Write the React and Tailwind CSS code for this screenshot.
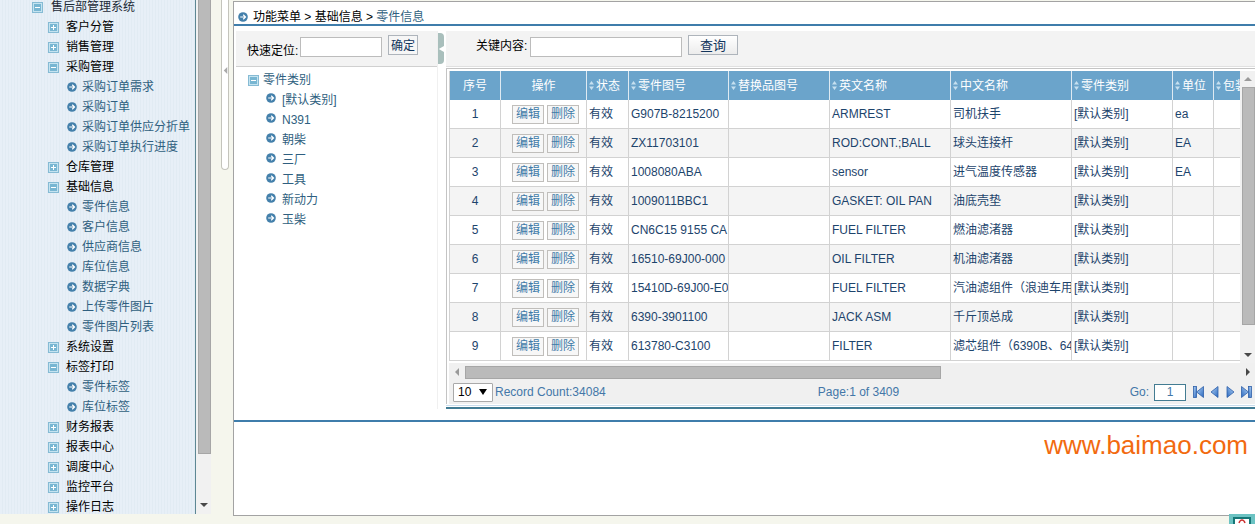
const cjk = "font-['Liberation_Sans','Noto_Sans_CJK_SC',sans-serif]";

const menu = [
  { level: 0, open: true, label: "售后部管理系统" },
  { level: 1, open: false, label: "客户分管" },
  { level: 1, open: false, label: "销售管理" },
  { level: 1, open: true, label: "采购管理" },
  { level: 2, label: "采购订单需求" },
  { level: 2, label: "采购订单" },
  { level: 2, label: "采购订单供应分折单" },
  { level: 2, label: "采购订单执行进度" },
  { level: 1, open: false, label: "仓库管理" },
  { level: 1, open: true, label: "基础信息" },
  { level: 2, label: "零件信息" },
  { level: 2, label: "客户信息" },
  { level: 2, label: "供应商信息" },
  { level: 2, label: "库位信息" },
  { level: 2, label: "数据字典" },
  { level: 2, label: "上传零件图片" },
  { level: 2, label: "零件图片列表" },
  { level: 1, open: false, label: "系统设置" },
  { level: 1, open: true, label: "标签打印" },
  { level: 2, label: "零件标签" },
  { level: 2, label: "库位标签" },
  { level: 1, open: false, label: "财务报表" },
  { level: 1, open: false, label: "报表中心" },
  { level: 1, open: false, label: "调度中心" },
  { level: 1, open: false, label: "监控平台" },
  { level: 1, open: false, label: "操作日志" },
];

const categories = ["[默认类别]", "N391", "朝柴", "三厂", "工具", "新动力", "玉柴"];

const columns = ["状态", "零件图号", "替换品图号", "英文名称", "中文名称", "零件类别", "单位", "包装"];

const rows = [
  ["G907B-8215200", "ARMREST", "司机扶手", "ea"],
  ["ZX11703101", "ROD:CONT.;BALL", "球头连接杆", "EA"],
  ["1008080ABA", "sensor", "进气温度传感器", "EA"],
  ["1009011BBC1", "GASKET: OIL PAN", "油底壳垫", ""],
  ["CN6C15 9155 CA", "FUEL FILTER", "燃油滤渚器", ""],
  ["16510-69J00-000", "OIL FILTER", "机油滤渚器", ""],
  ["15410D-69J00-E0", "FUEL FILTER", "汽油滤组件（浪迪车用", ""],
  ["6390-3901100", "JACK ASM", "千斤顶总成", ""],
  ["613780-C3100", "FILTER", "滤芯组件（6390B、64", ""],
];

function ToggleIcon({ open }) {
  return (
    <svg className="size-[11px] shrink-0" viewBox="0 0 11 11" shapeRendering="crispEdges" aria-hidden="true">
      <rect width="11" height="11" fill="#86bbd4" />
      <rect x="1" y="1" width="9" height="9" fill="#c4e3f0" />
      <rect x="2" y="2" width="7" height="7" fill="#78b6d2" />
      <rect x="3" y="5" width="5" height="1" fill="#fff" />
      {!open && <rect x="5" y="3" width="1" height="5" fill="#fff" />}
    </svg>
  );
}

function ArrowDot() {
  return (
    <svg className="size-[10px] shrink-0" viewBox="0 0 10 10" aria-hidden="true">
      <circle cx="5" cy="5" r="4.8" fill="#4480ab" />
      <path d="M2.2 5H7.4M5.2 2.8L7.5 5L5.2 7.2" fill="none" stroke="#fff" strokeWidth="1.2" />
    </svg>
  );
}

function Triangle({ points, className, fill }) {
  return (
    <svg className={className} viewBox="0 0 8 8" aria-hidden="true">
      <polygon points={points} fill={fill} />
    </svg>
  );
}

function SortIcon() {
  return (
    <svg className="h-[9px] w-[5px] shrink-0" viewBox="0 0 5 9" aria-hidden="true">
      <path d="M2.5 0L5 3.4H0ZM2.5 9L5 5.6H0Z" fill="#c6e0f0" />
    </svg>
  );
}

function PagerIcon({ kind }) {
  const left = kind === "first" || kind === "prev";
  const bar = kind === "first" || kind === "last";
  return (
    <svg className="h-3 w-[11px]" viewBox="0 0 11 12" aria-hidden="true">
      <defs>
        <linearGradient id={"pager-" + kind} x1="0" y1="0" x2="1" y2="1">
          <stop offset="0" stopColor="#b4d4f5" />
          <stop offset="1" stopColor="#2a68c0" />
        </linearGradient>
      </defs>
      <g fill={"url(#pager-" + kind + ")"} stroke="#2e5fa8" strokeWidth="0.8" transform={left ? undefined : "translate(11 0) scale(-1 1)"}>
        {bar && <rect x="0.5" y="0.5" width="3" height="11" />}
        <polygon points={bar ? "3.6,6 10.5,0.5 10.5,11.5" : "2,6 9,0.5 9,11.5"} />
      </g>
    </svg>
  );
}

function Sidebar() {
  return (
    <nav className="w-[196px] shrink-0 overflow-hidden border-r border-[#5d8794] bg-[repeating-linear-gradient(90deg,#e7eff7_0_2px,#e1ebf3_2px_3px)]">
      <ul className="-mt-[3px]">
        {menu.map((item) => (
          <li
            key={item.label}
            className={
              "flex h-5 items-center whitespace-nowrap " +
              (item.level === 0 ? "gap-2 pl-8" : item.level === 1 ? "gap-[7px] pl-12" : "gap-[5px] pl-[67px]")
            }
          >
            {item.level === 2 ? <ArrowDot /> : <ToggleIcon open={item.open} />}
            <a href="#" className={item.level === 2 ? "text-[#2f5f80]" : item.level === 1 ? "text-black" : "text-[#1c2a36]"}>
              {item.label}
            </a>
          </li>
        ))}
      </ul>
    </nav>
  );
}

function CategoryPanel() {
  return (
    <aside className="w-[202px] shrink-0 border-r border-[#f0f0f0]">
      <form className="flex h-9 items-center border-b border-[#d0d0d0] bg-[#f3f3f3] pl-[11px]">
        <label htmlFor="locate" className="w-[53px] whitespace-nowrap pt-1">快速定位:</label>
        <input id="locate" className="mb-[3px] h-5 w-[82px] border border-[#bcbcbc] bg-white px-1" />
        <button type="button" className="mb-[7px] ml-[6px] h-5 w-[30px] border border-[#aeb4bb] bg-[#f6f6f6] pt-[2px] leading-4 text-[#12355c]">
          确定
        </button>
      </form>
      <div className="pl-3 pt-[3px] text-[#2f5f80]">
        <div className="flex h-5 items-center gap-1">
          <ToggleIcon open />
          <span>零件类别</span>
        </div>
        <ul>
          {categories.map((name) => (
            <li key={name} className="flex h-5 items-center gap-[6px] pl-[18px]">
              <span className="pb-1"><ArrowDot /></span>
              <a href="#">{name}</a>
            </li>
          ))}
        </ul>
      </div>
    </aside>
  );
}

const rowButton = "h-[19px] w-8 border border-[#c0bebb] bg-[#f7f7f7] leading-[17px] text-[#3f7ba8]";
const cell = "overflow-hidden whitespace-nowrap border-b border-r border-[#d2d2d2] pl-[2px]";

function PartsTable() {
  return (
    <div className="flex h-[292px]">
      <div className="min-w-0 flex-1 overflow-hidden">
        <table className="w-[820px] table-fixed border-separate border-spacing-0 border-l border-[#d2d2d2] text-[#1d446c]">
          <colgroup>
            <col className="w-[51px]" />
            <col className="w-[86px]" />
            <col className="w-[42px]" />
            <col className="w-[100px]" />
            <col className="w-[101px]" />
            <col className="w-[121px]" />
            <col className="w-[121px]" />
            <col className="w-[101px]" />
            <col className="w-[41px]" />
            <col />
          </colgroup>
          <thead>
            <tr className="h-[29px] bg-[#6ba4cb] text-white">
              <th className="border-r border-[#dfeaf2] font-normal">序号</th>
              <th className="border-r border-[#dfeaf2] font-normal">操作</th>
              {columns.map((name) => (
                <th key={name} className="overflow-hidden border-r border-[#dfeaf2] pl-[2px] font-normal">
                  <span className="flex items-center gap-[2px] whitespace-nowrap">
                    <SortIcon />
                    {name}
                  </span>
                </th>
              ))}
            </tr>
          </thead>
          <tbody>
            {rows.map(([code, english, chinese, unit], i) => (
              <tr key={code} className={i % 2 ? "h-[29px] bg-[#f4f4f4]" : "h-[29px] bg-white"}>
                <td className="border-b border-r border-[#d2d2d2] text-center">{i + 1}</td>
                <td className="border-b border-r border-[#d2d2d2]">
                  <div className="flex justify-center gap-[3px] pl-1">
                    <button type="button" className={rowButton}>编辑</button>
                    <button type="button" className={rowButton}>删除</button>
                  </div>
                </td>
                <td className={cell}>有效</td>
                <td className={cell}>{code}</td>
                <td className={cell} />
                <td className={cell}>{english}</td>
                <td className={cell}>{chinese}</td>
                <td className={cell}>[默认类别]</td>
                <td className={cell}>{unit}</td>
                <td className={cell} />
              </tr>
            ))}
          </tbody>
        </table>
      </div>
      <div className="flex w-[15px] shrink-0 flex-col items-center bg-[#f1f1f1]">
        <div className="flex h-4 items-center">
          <Triangle points="0,6 4,2 8,6" fill="#9a9a9a" className="size-2" />
        </div>
        <div className="w-[13px] flex-1 self-end border border-[#a6a6a6] bg-[#bababa]" />
        <div className="flex h-[38px] items-end pb-1">
          <Triangle points="0,2 4,6 8,2" fill="#484848" className="size-2" />
        </div>
      </div>
    </div>
  );
}

function PartsPanel() {
  return (
    <section className="flex min-w-0 flex-1 flex-col">
      <form className="flex h-[35px] items-center bg-[#f3f3f3] pl-[30px]">
        <label htmlFor="keyword" className="mb-[6px] w-[54px] whitespace-nowrap">关键内容:</label>
        <input id="keyword" className="mb-[3px] h-5 w-[152px] border border-[#bcbcbc] bg-white px-1" />
        <button type="button" className="mb-[7px] ml-[6px] h-5 w-[50px] border border-[#aeb4bb] bg-gradient-to-b from-white to-[#ececec] pt-[2px] text-[13px] leading-4 text-[#12355c]">
          查询
        </button>
      </form>
      <div className="border-t border-[#e0e0e0] pt-px">
        <div className="border-l border-t border-[#c4c4c4] bg-white pl-[2px] pt-[2px]">
          <PartsTable />
          <div className="flex h-[18px] items-center bg-[#f0f0f0]">
            <Triangle points="6,0 2,4 6,8" fill="#9a9a9a" className="ml-1 size-2" />
            <div className="ml-1 h-[13px] w-[59%] border border-[#a6a6a6] bg-[#bababa]" />
            <span className="flex-1" />
            <Triangle points="2,0 6,4 2,8" fill="#484848" className="mr-[3px] size-2" />
          </div>
          <div className="flex h-[23px] items-center bg-[#f0f0f0] pb-px pl-1 text-[#4377a8]">
            <div className="flex flex-1 items-center gap-[2px]">
              <select aria-label="Rows per page" defaultValue="10" className="h-[19px] w-10 appearance-none rounded-[1px] border border-[#a9a9a9] bg-white pl-1 text-xs leading-4 text-black">
                <option>10</option>
                <option>20</option>
              </select>
              <Triangle points="0,1 8,1 4,7" fill="#000" className="pointer-events-none -ml-4 mr-[6px] size-2" />
              <span>Record Count:34084</span>
            </div>
            <span className="ml-3">Page:1 of 3409</span>
            <div className="flex flex-1 items-center justify-end gap-[5px] pr-[3px]">
              <label htmlFor="goto">Go:</label>
              <input id="goto" defaultValue="1" className="mr-[2px] h-[17px] w-8 border border-[#437c92] bg-white text-center" />
              {["first", "prev", "next", "last"].map((kind) => (
                <button key={kind} type="button" aria-label={kind}>
                  <PagerIcon kind={kind} />
                </button>
              ))}
            </div>
          </div>
        </div>
        <div className="mt-px border-t border-[#c8dcec] pt-px">
          <div className="h-[2px] bg-[#427c94]" />
        </div>
      </div>
    </section>
  );
}

export default function App() {
  return (
    <div className={"relative flex h-screen overflow-hidden bg-[#f5f6ed] text-xs text-black " + cjk}>
      <div className="flex pb-[10px]">
        <Sidebar />
        <div className="flex w-[15px] flex-col items-center bg-[#f1f1f1]">
          <div className="w-[13px] flex-1 self-end border-x border-b border-[#a6a6a6] bg-[#bababa]" />
          <div className="flex h-[60px] items-end pb-[5px]">
            <Triangle points="0,2 4,6 8,2" fill="#484848" className="size-2" />
          </div>
        </div>
      </div>
      <div className="w-[22px] shrink-0 pl-[10px]">
        <div className="flex h-[170px] w-2 items-center rounded-b-sm border border-t-0 border-[#c4c4bc] bg-white">
          <span className="h-9 w-full">
            <Triangle points="6,0 2,4 6,8" fill="#a9a9a9" className="size-[7px]" />
          </span>
        </div>
      </div>
      <main className="mb-2 mt-px flex min-w-0 flex-1 flex-col border-y border-l border-[#a3a3a3] bg-white">
        <div className="flex h-6 items-center gap-[5px] border-b-2 border-[#3f7dab] pl-1 pt-[7px]">
          <ArrowDot />
          <p className="whitespace-nowrap">
            功能菜单 &gt; 基础信息 &gt; <span className="text-[#2f5f80]">零件信息</span>
          </p>
        </div>
        <div className="flex pl-[2px] pt-[5px]">
          <CategoryPanel />
          <button type="button" aria-label="collapse" className="mr-[2px] mt-[2px] flex h-[31px] w-[6px] items-center rounded-r-sm bg-[#a9bfbc]">
            <Triangle points="8,0 1,4 8,8" fill="#fff" className="size-[6px]" />
          </button>
          <PartsPanel />
        </div>
        <div className="mt-[11px] flex-1 border-t-2 border-[#3f7dab] pr-[7px] pt-[7px] text-right text-[26px] leading-8 text-[#f26a0f]">
          www.baimao.com
        </div>
      </main>
      <div className="absolute bottom-0 right-0 h-[10px] w-[26px] bg-[#6cc3c3] pl-1 pt-[3px]">
        <div className="h-[7px] w-[18px] border-2 border-b-0 border-[#157777] bg-white">
          <svg className="mx-auto h-[5px] w-2" viewBox="0 0 8 5" aria-hidden="true">
            <path d="M1 4Q2 1 4 1Q6 1 7 4" fill="none" stroke="#c33" strokeWidth="1.5" />
          </svg>
        </div>
      </div>
    </div>
  );
}
